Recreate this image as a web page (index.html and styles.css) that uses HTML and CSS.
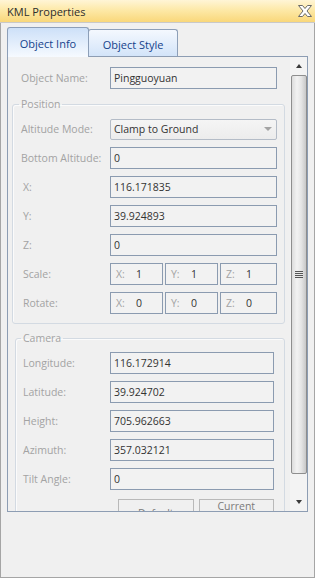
FILE: index.html
```html
<!DOCTYPE html>
<html lang="en">
<head>
    <meta charset="UTF-8">
    <title>KML Properties</title>
    <link rel="stylesheet" href="styles.css">
</head>
<body>
    <div class="window">
        <div class="titlebar">
            <span class="title">KML Properties</span>
            <svg class="close" width="14" height="12" viewBox="0 0 14 12">
                <path d="M0.5 0.5H4.5L7 3.5L9.5 0.5H13.5L9 6L13.5 11.5H9.5L7 8.5L4.5 11.5H0.5L5 6Z" fill="#fff" stroke="#6a6a6a" stroke-width="1"/>
            </svg>
        </div>

        <div class="tabs">
            <div class="tab active">Object Info</div>
            <div class="tab">Object Style</div>
        </div>

        <div class="panel">
            <div class="content">
                <div class="row top-row">
                    <span class="lbl">Object Name:</span>
                    <div class="field">Pingguoyuan</div>
                </div>

                <fieldset class="group pos">
                    <legend>Position</legend>
                    <div class="rows">
                        <div class="row">
                            <span class="lbl">Altitude Mode:</span>
                            <div class="combo">Clamp to Ground<span class="combo-arrow"></span></div>
                        </div>
                        <div class="row">
                            <span class="lbl">Bottom Altitude:</span>
                            <div class="field">0</div>
                        </div>
                        <div class="row">
                            <span class="lbl short">X:</span>
                            <div class="field">116.171835</div>
                        </div>
                        <div class="row">
                            <span class="lbl short">Y:</span>
                            <div class="field">39.924893</div>
                        </div>
                        <div class="row">
                            <span class="lbl short">Z:</span>
                            <div class="field">0</div>
                        </div>
                        <div class="row">
                            <span class="lbl short">Scale:</span>
                            <div class="triple">
                                <div class="mini"><span class="axis">X:</span>1</div>
                                <div class="mini"><span class="axis">Y:</span>1</div>
                                <div class="mini"><span class="axis">Z:</span>1</div>
                            </div>
                        </div>
                        <div class="row">
                            <span class="lbl short">Rotate:</span>
                            <div class="triple">
                                <div class="mini"><span class="axis">X:</span>0</div>
                                <div class="mini"><span class="axis">Y:</span>0</div>
                                <div class="mini"><span class="axis">Z:</span>0</div>
                            </div>
                        </div>
                    </div>
                </fieldset>

                <fieldset class="group cam">
                    <legend>Camera</legend>
                    <div class="rows">
                        <div class="row">
                            <span class="lbl">Longitude:</span>
                            <div class="field">116.172914</div>
                        </div>
                        <div class="row">
                            <span class="lbl">Latitude:</span>
                            <div class="field">39.924702</div>
                        </div>
                        <div class="row">
                            <span class="lbl">Height:</span>
                            <div class="field">705.962663</div>
                        </div>
                        <div class="row">
                            <span class="lbl">Azimuth:</span>
                            <div class="field">357.032121</div>
                        </div>
                        <div class="row">
                            <span class="lbl">Tilt Angle:</span>
                            <div class="field">0</div>
                        </div>
                    </div>
                    <div class="buttons">
                        <div class="btn">Default</div>
                        <div class="btn">Current<br>Position</div>
                    </div>
                </fieldset>
            </div>

            <div class="scrollbar">
                <div class="sb-btn"><span class="arrow-up"></span></div>
                <div class="thumb"><span class="grip"></span></div>
                <div class="sb-track"></div>
                <div class="sb-btn"><span class="arrow-down"></span></div>
            </div>
        </div>
    </div>
</body>
</html>
```

FILE: styles.css
```css
body {
    margin: 0;
    font-family: "Open Sans", "Liberation Sans", sans-serif;
    font-size: 10.5px;
    background-color: #f0f0f0;
}

.window {
    width: 315px;
    height: 578px;
    box-sizing: border-box;
    border: 1px solid #a5a5a5;
    border-top: none;
    background-color: #f0f0f0;
}

.titlebar {
    height: 22px;
    margin: 0 -1px;
    padding: 0 3px 0 7px;
    display: flex;
    align-items: center;
    justify-content: space-between;
    border-bottom: 1px solid #c9c9c9;
    background: linear-gradient(#fff5d6, #fde9a8 45%, #f9d77a);
}

.title {
    font-size: 11px;
    color: #2d2d2d;
}

.close {
    display: block;
}

/* tabs */
.tabs {
    height: 33px;
    padding-left: 6px;
    display: flex;
    align-items: flex-end;
}

.tab {
    height: 27px;
    width: 90px;
    box-sizing: border-box;
    padding-top: 2px;
    display: flex;
    align-items: center;
    justify-content: center;
    border: 1px solid #8d9fb8;
    border-bottom: none;
    border-radius: 3px 3px 0 0;
    color: #15428b;
    font-size: 11px;
    background: linear-gradient(#f4f8fe, #d3e4f9);
    margin-left: -1px;
}

.tab.active {
    width: 82px;
    height: 30px;
    margin-left: 0;
    margin-bottom: -1px;
    position: relative;
    z-index: 1;
    background: linear-gradient(#cde0f8, #f6faff);
}

/* panel */
.panel {
    margin: 0 6px;
    height: 456px;
    box-sizing: border-box;
    border: 1px solid #8d9db3;
    display: flex;
}

.content {
    flex: 1;
    overflow: hidden;
    padding-top: 10px;
}

.row {
    height: 22px;
    display: flex;
    align-items: center;
}

.lbl {
    flex: none;
    width: 89px;
    color: #a3a3a3;
}

.lbl.short {
    width: 87px;
    padding-left: 2px;
}

.top-row {
    padding-left: 13px;
}

.field {
    width: 167px;
    height: 22px;
    box-sizing: border-box;
    padding-left: 3px;
    display: flex;
    align-items: center;
    border: 1px solid #8b9bb0;
    background-color: #f2f2f2;
    color: #333;
}

.combo {
    width: 167px;
    height: 21px;
    box-sizing: border-box;
    padding-left: 3px;
    display: flex;
    align-items: center;
    justify-content: space-between;
    border: 1px solid #b4bcc7;
    border-radius: 2px;
    background: linear-gradient(#f5f5f5, #ececec);
    color: #333;
}

.combo-arrow {
    margin-right: 4px;
    border-left: 4px solid transparent;
    border-right: 4px solid transparent;
    border-top: 4px solid #a4a4a4;
}

.triple {
    display: flex;
    gap: 2px;
}

.mini {
    width: 53px;
    height: 22px;
    box-sizing: border-box;
    padding-left: 5px;
    display: flex;
    align-items: center;
    border: 1px solid #8b9bb0;
    background-color: #f2f2f2;
    color: #333;
}

.mini:last-child {
    width: 57px;
}

.axis {
    width: 20px;
    color: #a3a3a3;
}

/* group boxes */
.group {
    min-width: 0;
    border: 1px solid #d3dae2;
    border-radius: 3px;
    box-shadow: inset 1px 1px 0 #fbfbfb;
}

.group legend {
    padding: 0 2px;
    margin-left: -2px;
    line-height: 14px;
    color: #a3a3a3;
}

.rows {
    display: flex;
    flex-direction: column;
    gap: 7px;
}

.pos {
    margin: 8px 5px 0 4px;
    padding: 7px 7px 9px 8px;
}

.cam {
    margin: 7px 5px 0 7px;
    padding: 7px 10px 0 7px;
}

.cam .lbl {
    width: 87px;
}

.cam .field {
    width: 164px;
}

.buttons {
    margin: 9px 0 0 95px;
    display: flex;
    gap: 5px;
}

.btn {
    width: 76px;
    height: 28px;
    box-sizing: border-box;
    display: flex;
    align-items: center;
    justify-content: center;
    text-align: center;
    line-height: 13px;
    overflow: hidden;
    border: 1px solid #b9b9b9;
    background-color: #f0f0f0;
    color: #7a7a7a;
}

/* scrollbar */
.scrollbar {
    width: 17px;
    box-sizing: border-box;
    padding-left: 1px;
    display: flex;
    flex-direction: column;
    background-color: #f3f3f3;
}

.sb-btn {
    height: 18px;
    flex: none;
    display: flex;
    justify-content: center;
    align-items: center;
}

.arrow-up {
    border-left: 3.5px solid transparent;
    border-right: 3.5px solid transparent;
    border-bottom: 4px solid #3a3a3a;
}

.arrow-down {
    border-left: 3.5px solid transparent;
    border-right: 3.5px solid transparent;
    border-top: 4px solid #3a3a3a;
}

.thumb {
    height: 399px;
    flex: none;
    box-sizing: border-box;
    display: flex;
    align-items: center;
    justify-content: center;
    border: 1px solid #8e8e8e;
    border-radius: 2px;
    background: linear-gradient(to right, #dcdcdc, #f2f2f2 35%, #e6e6e6 65%, #c8c8c8);
}

.grip {
    width: 8px;
    height: 7px;
    background: repeating-linear-gradient(#555 0 1px, #e8e8e8 1px 2px);
}

.sb-track {
    flex: 1;
}
```
